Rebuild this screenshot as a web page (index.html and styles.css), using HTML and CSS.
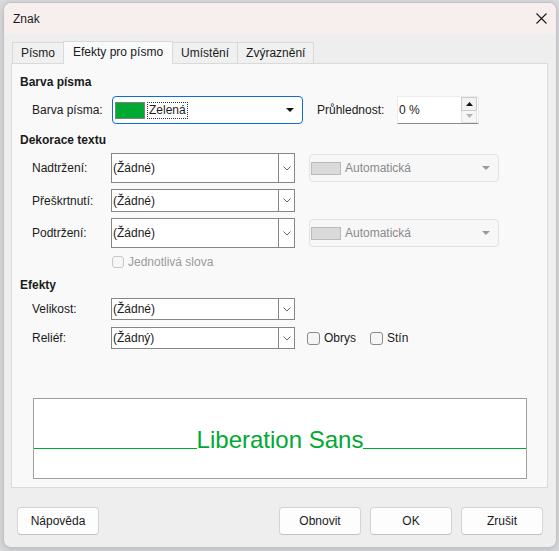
FILE: index.html
```html
<!DOCTYPE html>
<html lang="cs">
<head>
    <meta charset="UTF-8">
    <meta name="viewport" content="width=device-width, initial-scale=1.0">
    <title>Znak</title>
    <link rel="stylesheet" href="styles.css">
</head>
<body>
    <div class="dialog">
        <div class="titlebar">
            <span class="dialog-title">Znak</span>
            <span class="close-button">
                <svg width="11" height="11" viewBox="0 0 11 11"><path d="M0.5 0.5L10.5 10.5M10.5 0.5L0.5 10.5" stroke="#1b1b1b" stroke-width="1.1" fill="none"/></svg>
            </span>
        </div>

        <div class="dialog-body">
            <div class="tabs">
                <div class="tab">Písmo</div>
                <div class="tab active">Efekty pro písmo</div>
                <div class="tab">Umístění</div>
                <div class="tab">Zvýraznění</div>
            </div>

            <div class="tab-panel">
                <!-- barva -->
                <h2 class="section-title">Barva písma</h2>
                <div class="form-row row-color">
                    <span class="form-label">Barva písma:</span>
                    <div class="color-select">
                        <span class="swatch swatch-green"></span>
                        <span class="color-name">Zelená</span>
                        <svg class="solid-arrow" width="8" height="4" viewBox="0 0 8 4"><polygon points="0,0 8,0 4,4" fill="#111"/></svg>
                    </div>
                    <span class="form-label label-opacity">Průhlednost:</span>
                    <div class="spin-field">
                        <span class="spin-value">0 %</span>
                        <div class="spin-buttons">
                            <span class="spin-up"><svg width="7" height="4" viewBox="0 0 7 4"><polygon points="0,4 7,4 3.5,0" fill="#111"/></svg></span>
                            <span class="spin-down"><svg width="7" height="4" viewBox="0 0 7 4"><polygon points="0,0 7,0 3.5,4" fill="#b4b4b4"/></svg></span>
                        </div>
                    </div>
                </div>

                <!-- dekorace -->
                <h2 class="section-title title-decor">Dekorace textu</h2>
                <div class="form-row row-tall row-overline">
                    <span class="form-label">Nadtržení:</span>
                    <div class="combo">
                        <span class="combo-text">(Žádné)</span>
                        <span class="combo-btn"><svg width="8" height="5" viewBox="0 0 8 5"><path d="M0.5 0.5L4 4L7.5 0.5" stroke="#666" fill="none"/></svg></span>
                    </div>
                    <div class="color-select disabled">
                        <span class="swatch swatch-auto"></span>
                        <span class="color-name">Automatická</span>
                        <svg class="solid-arrow" width="8" height="4" viewBox="0 0 8 4"><polygon points="0,0 8,0 4,4" fill="#9a9a9a"/></svg>
                    </div>
                </div>
                <div class="form-row row-mid row-strike">
                    <span class="form-label">Přeškrtnutí:</span>
                    <div class="combo">
                        <span class="combo-text">(Žádné)</span>
                        <span class="combo-btn"><svg width="8" height="5" viewBox="0 0 8 5"><path d="M0.5 0.5L4 4L7.5 0.5" stroke="#666" fill="none"/></svg></span>
                    </div>
                </div>
                <div class="form-row row-tall row-underline">
                    <span class="form-label">Podtržení:</span>
                    <div class="combo">
                        <span class="combo-text">(Žádné)</span>
                        <span class="combo-btn"><svg width="8" height="5" viewBox="0 0 8 5"><path d="M0.5 0.5L4 4L7.5 0.5" stroke="#666" fill="none"/></svg></span>
                    </div>
                    <div class="color-select disabled">
                        <span class="swatch swatch-auto"></span>
                        <span class="color-name">Automatická</span>
                        <svg class="solid-arrow" width="8" height="4" viewBox="0 0 8 4"><polygon points="0,0 8,0 4,4" fill="#9a9a9a"/></svg>
                    </div>
                </div>
                <div class="check-row row-words">
                    <span class="checkbox disabled"></span>
                    <span class="check-label disabled">Jednotlivá slova</span>
                </div>

                <!-- efekty -->
                <h2 class="section-title title-effects">Efekty</h2>
                <div class="form-row row-small row-size">
                    <span class="form-label">Velikost:</span>
                    <div class="combo">
                        <span class="combo-text">(Žádné)</span>
                        <span class="combo-btn"><svg width="8" height="5" viewBox="0 0 8 5"><path d="M0.5 0.5L4 4L7.5 0.5" stroke="#666" fill="none"/></svg></span>
                    </div>
                </div>
                <div class="form-row row-small row-relief">
                    <span class="form-label">Reliéf:</span>
                    <div class="combo">
                        <span class="combo-text">(Žádný)</span>
                        <span class="combo-btn"><svg width="8" height="5" viewBox="0 0 8 5"><path d="M0.5 0.5L4 4L7.5 0.5" stroke="#666" fill="none"/></svg></span>
                    </div>
                    <span class="checkbox cb-outline"></span>
                    <span class="check-label">Obrys</span>
                    <span class="checkbox cb-shadow"></span>
                    <span class="check-label">Stín</span>
                </div>

                <!-- náhled -->
                <div class="preview">
                    <div class="preview-line">
                        <span class="preview-rule"></span>
                        <span class="preview-text">Liberation Sans</span>
                        <span class="preview-rule"></span>
                    </div>
                </div>
            </div>

            <div class="button-bar">
                <button class="dlg-button">Nápověda</button>
                <button class="dlg-button btn-reset">Obnovit</button>
                <button class="dlg-button">OK</button>
                <button class="dlg-button">Zrušit</button>
            </div>
        </div>
    </div>
</body>
</html>
```

FILE: styles.css
```css
* {
    margin: 0;
    padding: 0;
    box-sizing: border-box;
}

body {
    font-family: "Liberation Sans", Arial, sans-serif;
    font-size: 12px;
    color: #1b1b1b;
    background: #d9dbde;
    width: 559px;
    height: 551px;
    overflow: hidden;
}

.dialog {
    margin: 2px 0 0 3px;
    width: 554px;
    height: 546px;
    border: 1px solid #c2c2c2;
    border-radius: 8px;
    background: #eeeeee;
    display: flex;
    flex-direction: column;
    overflow: hidden;
    box-shadow: 0 2px 8px rgba(0, 0, 0, 0.15);
}

.titlebar {
    flex: none;
    height: 31px;
    background: #f7efee;
    display: flex;
    align-items: center;
    justify-content: space-between;
    padding: 0 9px 0 9px;
}

.dialog-title {
    font-size: 12px;
}

.close-button {
    display: flex;
    margin-top: -1px;
}

.dialog-body {
    flex: 1;
    display: flex;
    flex-direction: column;
    padding: 7px 8px 12px 7px;
}

/* zalozky */
.tabs {
    flex: none;
    display: flex;
    align-items: flex-end;
    height: 22px;
    padding-left: 1px;
}

.tab {
    height: 21px;
    line-height: 20px;
    padding: 0 8px;
    background: #f0f0f0;
    border: 1px solid #d9d9d9;
    border-bottom: none;
    margin-right: -1px;
}

.tab.active {
    position: relative;
    z-index: 1;
    height: 23px;
    line-height: 20px;
    padding: 0 9px;
    margin-bottom: -1px;
    background: #f9f9f9;
}

.tab-panel {
    flex: 1;
    display: flex;
    flex-direction: column;
    background: #f9f9f9;
    border: 1px solid #dadada;
    padding-top: 10px;
}

.section-title {
    font-size: 12px;
    font-weight: bold;
    line-height: 16px;
    padding-left: 8px;
}

.title-decor {
    margin-top: 8px;
}

.title-effects {
    margin-top: 8px;
}

.form-row {
    display: flex;
    align-items: center;
    padding-left: 20px;
}

.form-label {
    width: 79px;
    flex: none;
}

.row-color {
    height: 28px;
    margin-top: 6px;
}

.row-tall {
    height: 30px;
}

.row-mid {
    height: 23px;
}

.row-small {
    height: 22px;
}

.row-overline {
    margin-top: 5px;
}

.row-strike,
.row-underline {
    margin-top: 6px;
}

.row-size {
    margin-top: 5px;
}

.row-relief {
    margin-top: 7px;
}

/* vyber barvy */
.color-select {
    display: flex;
    align-items: center;
    width: 191px;
    height: 28px;
    margin-left: 1px;
    padding: 0 8px 0 2px;
    background: #ffffff;
    border: 1px solid #0a6fd0;
    border-radius: 4px;
}

.color-select .solid-arrow {
    margin-left: auto;
}

.swatch {
    width: 30px;
    height: 17px;
    border: 1px solid #808080;
    margin-right: 3px;
}

.swatch-green {
    background: #00a933;
}

.color-select .color-name {
    padding: 0 1px;
    line-height: 15px;
}

.row-color .color-name {
    outline: 1px dotted #333;
}

.color-select.disabled {
    width: 190px;
    margin-left: 14px;
    padding-left: 1px;
    background: #f7f7f7;
    border-color: #e2e2e2;
    color: #8a8a8a;
}

.swatch-auto {
    height: 13px;
    background: #dadada;
    border-color: #bababa;
    margin-right: 3px;
}

.label-opacity {
    margin-left: 14px;
    width: 80px;
}

.spin-field {
    display: flex;
    align-items: stretch;
    width: 82px;
    height: 28px;
    background: #ffffff;
    border: 1px solid #ececec;
    border-bottom-color: #8a8a8a;
    padding: 0 1px 0 1px;
}

.spin-value {
    flex: 1;
    display: flex;
    align-items: center;
}

.spin-buttons {
    width: 16px;
    display: flex;
    flex-direction: column;
}

.spin-up,
.spin-down {
    flex: 1;
    display: flex;
    align-items: center;
    justify-content: center;
}

.spin-up {
    background: #f2f2f2;
    border: 1px solid #cbcbcb;
}

.spin-down {
    background: #f6f6f6;
    border: 1px solid #e2e2e2;
    border-top: none;
}

/* rozbalovaci seznamy */
.combo {
    display: flex;
    width: 184px;
    height: 100%;
}

.combo-text {
    flex: 1;
    display: flex;
    align-items: center;
    padding-left: 1px;
    background: #ffffff;
    border: 1px solid #868686;
}

.combo-btn {
    width: 16px;
    display: flex;
    align-items: center;
    justify-content: center;
    background: #ffffff;
    border: 1px solid #868686;
    border-left: none;
}

/* zaskrtavaci policka */
.check-row {
    display: flex;
    align-items: center;
    height: 14px;
    margin-top: 7px;
    padding-left: 100px;
}

.checkbox {
    width: 13px;
    height: 13px;
    flex: none;
    background: #f5f5f5;
    border: 1px solid #8a8a8a;
    border-radius: 3px;
}

.checkbox.disabled {
    width: 12px;
    height: 12px;
    border-color: #c8c8c8;
    background: #f7f7f7;
}

.check-label {
    margin-left: 4px;
}

.check-label.disabled {
    color: #9a9a9a;
}

.cb-outline {
    margin-left: 12px;
}

.cb-shadow {
    margin-left: 14px;
}

/* nahled */
.preview {
    height: 81px;
    margin: 49px 20px 0 21px;
    padding-top: 27px;
    background: #ffffff;
    border: 1px solid #a0a0a0;
}

.preview-line {
    display: flex;
    align-items: flex-end;
    height: 27px;
}

.preview-rule {
    flex: 1;
    height: 1px;
    margin-bottom: 4px;
    background: #00a933;
}

.preview-text {
    font-size: 24px;
    line-height: 27px;
    color: #00a933;
}

/* tlacitka */
.button-bar {
    flex: none;
    display: flex;
    gap: 9px;
    margin-top: 19px;
    padding: 0 5px 0 6px;
}

.dlg-button {
    width: 82px;
    height: 28px;
    font-family: inherit;
    font-size: 12px;
    color: #1b1b1b;
    background: #fdfdfd;
    border: 1px solid #d3d3d3;
    border-bottom-color: #c2c2c2;
    border-radius: 4px;
}

.btn-reset {
    margin-left: auto;
}
```
